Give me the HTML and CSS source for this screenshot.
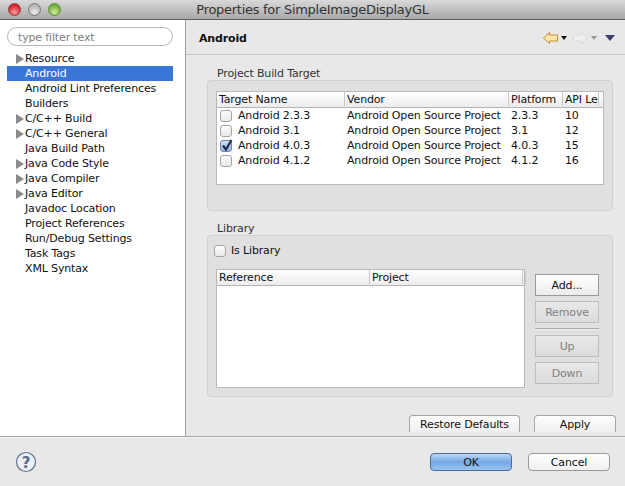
FILE: index.html
```html
<!DOCTYPE html>
<html lang="en">
<head>
  <meta charset="UTF-8" />
  <title>Properties for SimpleImageDisplayGL</title>
  <link rel="stylesheet" href="styles.css">
</head>
<body>
  <div class="window">
    <div class="titlebar">
      <div class="lights">
        <span class="light red"></span>
        <span class="light gray"></span>
        <span class="light green"></span>
      </div>
      <div class="title">Properties for SimpleImageDisplayGL</div>
    </div>

    <div class="main">
      <div class="sidebar">
        <input class="filter" type="text" placeholder="type filter text">
        <ul class="tree">
          <li class="branch">Resource</li>
          <li class="selected">Android</li>
          <li>Android Lint Preferences</li>
          <li>Builders</li>
          <li class="branch">C/C++ Build</li>
          <li class="branch">C/C++ General</li>
          <li>Java Build Path</li>
          <li class="branch">Java Code Style</li>
          <li class="branch">Java Compiler</li>
          <li class="branch">Java Editor</li>
          <li>Javadoc Location</li>
          <li>Project References</li>
          <li>Run/Debug Settings</li>
          <li>Task Tags</li>
          <li>XML Syntax</li>
        </ul>
      </div>

      <div class="content">
        <div class="page-head">
          <h2>Android</h2>
          <div class="nav">
            <svg width="15" height="12" viewBox="0 0 15 12"><path d="M0.500 6 L6.500 0.500 V3 H14.500 V9 H6.500 V11.500 Z" fill="#fde6b0" stroke="#c88d26" stroke-width="1"/></svg>
            <span class="caret"></span>
            <svg width="15" height="12" viewBox="0 0 15 12"><path d="M14.500 6 L8.500 0.500 V3 H0.500 V9 H8.500 V11.500 Z" fill="#efefef" stroke="#dcdcdc" stroke-width="1"/></svg>
            <span class="caret off"></span>
            <span class="menu-caret"></span>
          </div>
        </div>

        <div class="page-body">
          <div class="group-label">Project Build Target</div>
          <div class="group target-group">
            <div class="table target-table">
              <div class="thead target-cols">
                <span>Target Name</span><span>Vendor</span><span>Platform</span><span>API Le</span>
              </div>
              <div class="row target-cols">
                <span class="name"><i class="check"></i>Android 2.3.3</span><span>Android Open Source Project</span><span>2.3.3</span><span>10</span>
              </div>
              <div class="row target-cols">
                <span class="name"><i class="check"></i>Android 3.1</span><span>Android Open Source Project</span><span>3.1</span><span>12</span>
              </div>
              <div class="row target-cols">
                <span class="name"><i class="check on"><svg width="14" height="14" viewBox="0 0 14 14"><path d="M3 6.500 L6 10.500 L11.500 1" fill="none" stroke="#1f2f52" stroke-width="2.200"/></svg></i>Android 4.0.3</span><span>Android Open Source Project</span><span>4.0.3</span><span>15</span>
              </div>
              <div class="row target-cols">
                <span class="name"><i class="check"></i>Android 4.1.2</span><span>Android Open Source Project</span><span>4.1.2</span><span>16</span>
              </div>
            </div>
          </div>

          <div class="group-label lib-label">Library</div>
          <div class="group lib-group">
            <label class="is-lib"><i class="check"></i>Is Library</label>
            <div class="lib-row">
              <div class="table lib-table">
                <div class="thead lib-cols">
                  <span>Reference</span><span>Project</span><span></span>
                </div>
              </div>
              <div class="lib-buttons">
                <button class="btn">Add...</button>
                <button class="btn" disabled>Remove</button>
                <div class="btn-sep"></div>
                <button class="btn" disabled>Up</button>
                <button class="btn" disabled>Down</button>
              </div>
            </div>
          </div>

          <div class="page-actions">
            <button class="tab-btn restore">Restore Defaults</button>
            <button class="tab-btn apply">Apply</button>
          </div>
        </div>
      </div>
    </div>

    <div class="footer">
      <svg class="help" width="22" height="22" viewBox="0 0 22 22">
        <circle cx="11" cy="11" r="9.500" fill="#eef0f3" stroke="#5d7394" stroke-width="1.200"/>
        <text x="11" y="16.500" text-anchor="middle" class="help-mark">?</text>
      </svg>
      <div class="footer-btns">
        <button class="push default">OK</button>
        <button class="push">Cancel</button>
      </div>
    </div>
  </div>
</body>
</html>
```

FILE: styles.css
```css
* {
  box-sizing: border-box;
}

html, body {
  margin: 0;
  padding: 0;
}

body {
  width: 625px;
  height: 486px;
  overflow: hidden;
  font-family: "DejaVu Sans", sans-serif;
  font-size: 11px;
  letter-spacing: -0.15px;
  color: #111;
  background: #e8e8e8;
}

input, button {
  font-family: inherit;
  font-size: 11px;
  letter-spacing: inherit;
}

.window {
  display: flex;
  flex-direction: column;
  height: 486px;
}

.titlebar {
  height: 20px;
  display: grid;
  grid-template-columns: 1fr auto 1fr;
  align-items: center;
  background: linear-gradient(#d9d9d9, #a8a8a8);
  border-bottom: 1px solid #5e5e5e;
}

.lights {
  display: flex;
  gap: 7px;
  padding-left: 8px;
}

.light {
  width: 13px;
  height: 13px;
  border-radius: 50%;
  border: 1px solid #777;
}

.red { background: radial-gradient(circle at 50% 75%, #f79a9a, #d3222c 70%); border-color: #8e3a3a; }
.gray { background: radial-gradient(circle at 50% 75%, #eee, #b4b4b4 70%); }
.green { background: radial-gradient(circle at 50% 75%, #cdeb99, #6fae3a 70%); border-color: #5d8a3c; }

.title {
  font-size: 13px;
  letter-spacing: -0.28px;
  color: #333;
}

.main {
  display: flex;
  height: 417px;
  border-bottom: 1px solid #a6a6a6;
}

.sidebar {
  width: 186px;
  background: #fff;
  border-right: 1px solid #a0a0a0;
  padding: 7px 12px 0 7px;
}

.filter {
  display: block;
  width: 166px;
  height: 19px;
  padding: 1px 10px 0;
  border: 1px solid #b8b8b8;
  border-radius: 10px;
  background: #fff;
  outline: none;
}

.filter::placeholder {
  color: #808080;
}

.tree {
  list-style: none;
  margin: 5px 0 0;
  padding: 0;
  width: 166px;
}

.tree li {
  height: 15px;
  line-height: 15px;
  padding-left: 18px;
  white-space: nowrap;
  display: flex;
  align-items: center;
}

.tree .branch {
  padding-left: 9px;
}

.tree .branch::before {
  content: "";
  flex: none;
  margin-right: 1px;
  border-left: 8px solid #8a8a8a;
  border-top: 5px solid transparent;
  border-bottom: 5px solid transparent;
}

.tree .selected {
  background: #3875d7;
  color: #fff;
}

.content {
  flex: 1;
  display: flex;
  flex-direction: column;
  min-width: 0;
}

.page-head {
  height: 35px;
  display: flex;
  align-items: center;
  justify-content: space-between;
  padding: 0 10px 0 13px;
  border-bottom: 1px solid #c4c4c4;
}

.page-head h2 {
  margin: 0;
  padding-top: 2px;
  font-size: 11px;
  font-weight: bold;
  color: #111;
}

.nav {
  display: flex;
  align-items: center;
  padding-top: 2px;
}

.caret {
  width: 0;
  height: 0;
  margin: 0 6px 0 3px;
  border-left: 3px solid transparent;
  border-right: 3px solid transparent;
  border-top: 4px solid #111;
}

.caret.off {
  border-top-color: #999;
  margin-right: 8px;
}

.menu-caret {
  width: 0;
  height: 0;
  border-left: 5px solid transparent;
  border-right: 5px solid transparent;
  border-top: 6px solid #3f3f6b;
}

.page-body {
  flex: 1;
  padding: 11px 9px 0 21px;
}

.group-label {
  height: 14px;
  line-height: 15px;
  padding-left: 10px;
  color: #333;
}

.group {
  width: 406px;
  background: #e0e0e0;
  border: 1px solid #d0d0d0;
  border-radius: 4px;
}

.target-group {
  height: 131px;
  padding: 10px 8px 0 8px;
}

.table {
  background: #fff;
  border: 1px solid #b8b8b8;
}

.target-table {
  height: 94px;
}

.thead {
  height: 16px;
  line-height: 15px;
  background: linear-gradient(#fff, #ececec);
  border-bottom: 1px solid #b4b4b4;
}

.thead span {
  display: block;
  padding-left: 2px;
  border-right: 1px solid #c8c8c8;
  white-space: nowrap;
  overflow: hidden;
  height: 14px;
}

.target-cols {
  display: grid;
  grid-template-columns: 128px 164px 54px 36px;
}

.row {
  height: 15px;
  line-height: 15px;
  white-space: nowrap;
}

.row span {
  padding-left: 2px;
  overflow: hidden;
}

.row .name {
  display: flex;
  align-items: center;
  padding-left: 3px;
}

.check {
  display: block;
  flex: none;
  width: 12px;
  height: 12px;
  margin-right: 6px;
  border: 1px solid #a4a4a4;
  border-radius: 3px;
  background: linear-gradient(#fcfcfc, #e9e9e9);
  position: relative;
}

.check.on {
  background: linear-gradient(#cfe0f5, #8fb6e6);
  border-color: #6f86a8;
}

.check svg {
  position: absolute;
  left: -1px;
  top: -2px;
}

.lib-label {
  margin-top: 10px;
}

.lib-group {
  height: 162px;
  padding: 7px 8px 0 6px;
}

.is-lib {
  display: flex;
  align-items: center;
  height: 15px;
}

.is-lib .check {
  margin-right: 5px;
}

.lib-row {
  display: flex;
  margin-top: 11px;
  padding-left: 2px;
}

.lib-table {
  width: 309px;
  height: 119px;
}

.lib-cols {
  display: grid;
  grid-template-columns: 153px 153px 1fr;
}

.lib-buttons {
  margin: 5px 0 0 10px;
  width: 64px;
  display: flex;
  flex-direction: column;
}

.btn {
  height: 22px;
  padding: 0;
  color: #111;
  background: linear-gradient(#fff, #ececec);
  border: 1px solid #9a9a9a;
  margin-bottom: 5px;
}

.btn:disabled {
  color: #808080;
  background: linear-gradient(#e8e8e8, #dcdcdc);
  border-color: #bdbdbd;
}

.btn-sep {
  height: 2px;
  background: #aaa;
  border-bottom: 1px solid #f0f0f0;
  margin: 0 0 5px;
}

.page-actions {
  display: flex;
  margin-top: 18px;
  padding-left: 202px;
  gap: 14px;
}

.tab-btn {
  height: 17px;
  padding: 0;
  color: #111;
  background: linear-gradient(#fff, #eee);
  border: 1px solid #a4a4a4;
  border-bottom: none;
  border-radius: 4px 4px 0 0;
}

.restore { width: 111px; }
.apply { width: 82px; }

.footer {
  flex: 1;
  display: flex;
  align-items: center;
  justify-content: space-between;
  padding: 0 15px;
  background: #e8e8e8;
  border-top: 1px solid #f4f4f4;
}

.help-mark {
  font-family: "DejaVu Sans", sans-serif;
  font-size: 15px;
  font-weight: bold;
  fill: #54698c;
}

.footer-btns {
  display: flex;
  gap: 16px;
}

.push {
  width: 82px;
  height: 18px;
  padding: 0;
  color: #111;
  background: linear-gradient(#fff, #f0f0f0);
  border: 1px solid #9a9a9a;
  border-radius: 4px;
}

.push.default {
  background: linear-gradient(#bcd6f5, #73a7e6 50%, #9cc3f0);
  border-color: #4c6c9c;
}
```
